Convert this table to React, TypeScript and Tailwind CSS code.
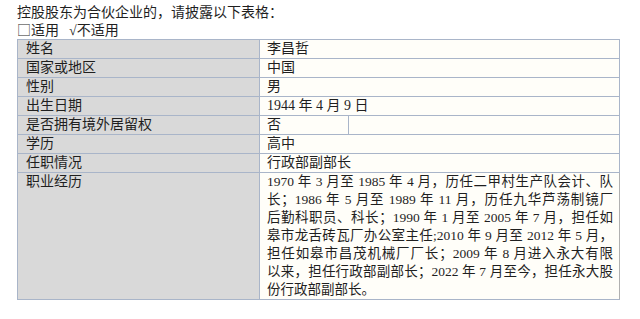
const rows: { label: string; value: string; split?: boolean }[] = [
  { label: "姓名", value: "李昌哲" },
  { label: "国家或地区", value: "中国" },
  { label: "性别", value: "男" },
  { label: "出生日期", value: "1944 年 4 月 9 日" },
  { label: "是否拥有境外居留权", value: "否", split: true },
  { label: "学历", value: "高中" },
  { label: "任职情况", value: "行政部副部长" },
];

const career = [
  "1970 年 3 月至 1985 年 4 月，历任二甲村生产队会计、队",
  "长；1986 年 5 月至 1989 年 11 月，历任九华芦荡制镜厂",
  "后勤科职员、科长；1990 年 1 月至 2005 年 7 月，担任如",
  "皋市龙舌砖瓦厂办公室主任;2010 年 9 月至 2012 年 5 月，",
  "担任如皋市昌茂机械厂厂长；2009 年 8 月进入永大有限",
  "以来，担任行政部副部长；2022 年 7 月至今，担任永大股",
];

const App = () => {
  return (
    <div className="w-[640px] h-[319px] bg-white text-[#1f1f1f] font-['Liberation_Serif','Noto_Sans_CJK_SC',serif] overflow-hidden">
      <div className="pl-[17px] pt-[4px]">
        <p className="text-[14px] leading-[17px]">控股股东为合伙企业的，请披露以下表格：</p>
        <p className="text-[14px] leading-[17px]">
          <span className="font-['Noto_Sans_CJK_SC',sans-serif] font-light">□</span>适用
          <span className="ml-[10px]">√</span>不适用
        </p>
      </div>

      <table className="ml-[17px] w-[603px] border-collapse text-[14px] leading-[18px]">
        <colgroup>
          <col className="w-[242px]" />
          <col className="w-[89px]" />
          <col />
        </colgroup>
        <tbody>
          {rows.map((row) => (
            <tr key={row.label} className="h-[19px]">
              <td className="border border-[#a9b5c9] bg-[#d9d9d9] pl-[8px] py-0 align-middle">
                {row.label}
              </td>
              {row.split ? (
                <>
                  <td className="border border-[#a9b5c9] bg-[#fffef9] pl-[7px] py-0">
                    {row.value}
                  </td>
                  <td className="border border-[#a9b5c9] bg-[#fffef9]" />
                </>
              ) : (
                <td
                  colSpan={2}
                  className="border border-[#a9b5c9] bg-[#fffef9] pl-[7px] py-0"
                >
                  {row.value}
                </td>
              )}
            </tr>
          ))}
          <tr>
            <td className="border border-[#a9b5c9] bg-[#d9d9d9] pl-[8px] py-0 align-top">
              职业经历
            </td>
            <td
              colSpan={2}
              className="border border-[#a9b5c9] border-r-[#b0b0b0] bg-[#fffef9] pl-[7px] pr-[6px] py-0 text-[13.5px] leading-[18px]"
            >
              {career.map((line) => (
                <div key={line} className="text-justify [text-align-last:justify]">
                  {line}
                </div>
              ))}
              <div>份行政部副部长。</div>
            </td>
          </tr>
        </tbody>
      </table>
    </div>
  );
};

export default App;
